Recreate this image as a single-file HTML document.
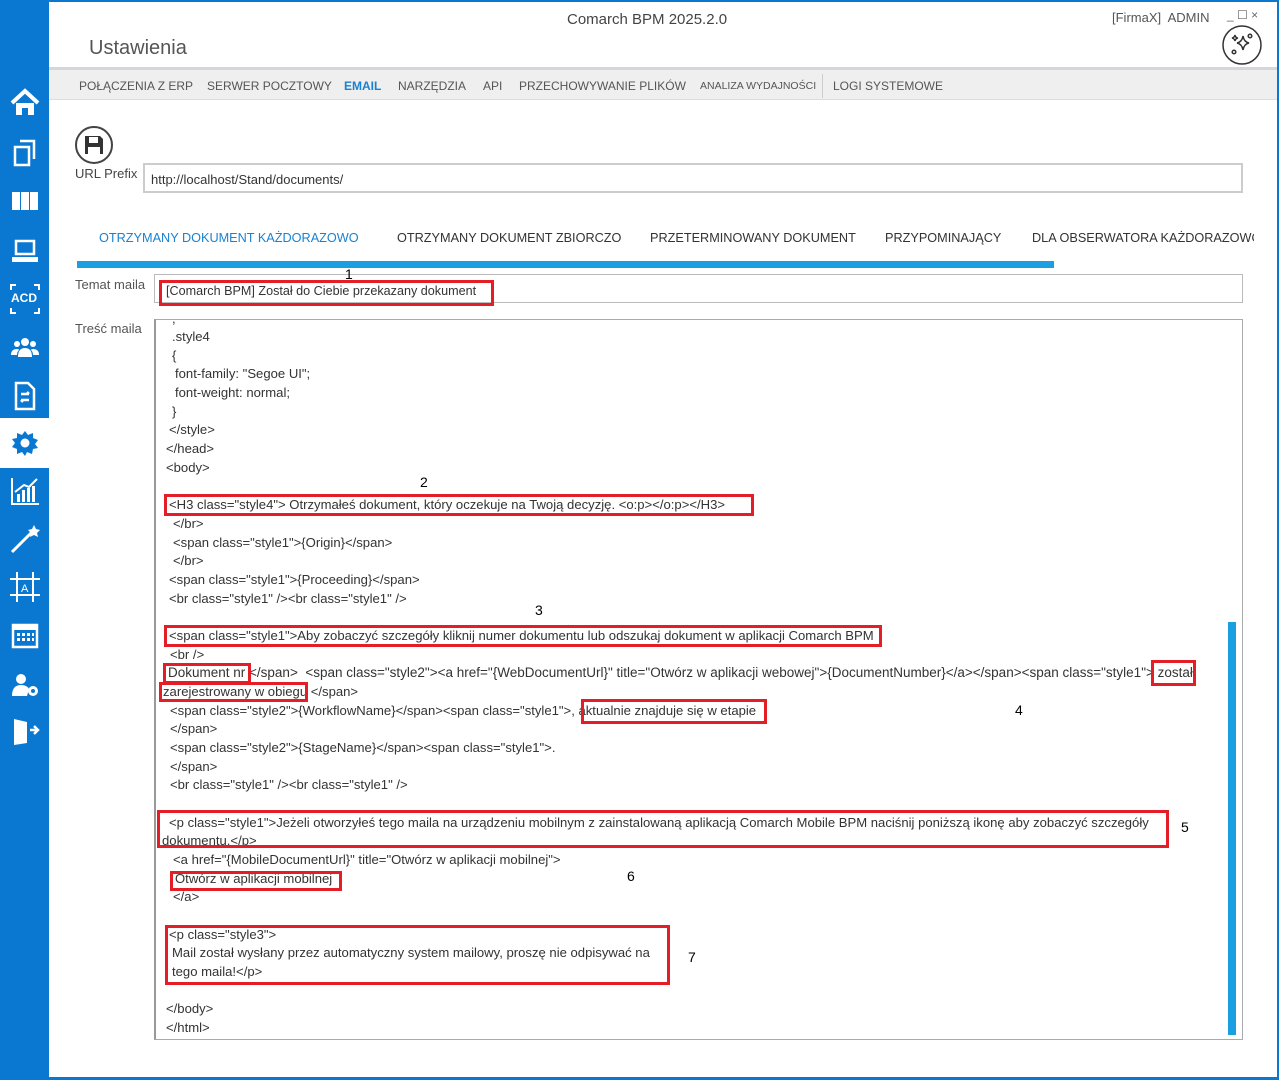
<!DOCTYPE html>
<html><head><meta charset="utf-8"><style>
*{margin:0;padding:0;box-sizing:border-box}
body{width:1279px;height:1080px;background:#fff;font-family:"Liberation Sans",sans-serif;color:#333;position:relative;overflow:hidden}
.a{position:absolute;white-space:nowrap}
#side{position:absolute;left:0;top:0;width:49px;height:1080px;background:#0a78d0}
.ic{position:absolute;left:10px;width:30px;height:30px}
.c{position:absolute;font-size:13.1px;line-height:18px;white-space:nowrap;color:#333}
.r{position:absolute;border:3px solid #e41e26}
.n{position:absolute;font-size:14px;color:#222}
.nav{font-size:12px;color:#555;top:79px}
.tab{font-size:12.7px;color:#333;top:231px}
</style></head><body>
<div id="side"></div>
<div class="a" style="left:0;top:0;width:1279px;height:2px;background:#0a78d0"></div>
<div class="a" style="left:1277px;top:0;width:2px;height:1080px;background:#0a78d0"></div>
<div class="a" style="left:0;top:1077px;width:1279px;height:3px;background:#0a78d0"></div>
<div class="a" style="left:0;top:418px;width:49px;height:50px;background:#fff"></div>
<svg class="ic" style="top:88px" viewBox="0 0 30 30"><path d="M2 15L15 3L28 15" stroke="#fff" stroke-width="4" fill="none"/><path d="M6 15V27H12V20H18V27H24V15" fill="#fff"/></svg>
<svg class="ic" style="top:137px" viewBox="0 0 30 30" fill="none" stroke="#fff" stroke-width="2.5"><path d="M10 4H24V22"/><path d="M5 10H19V28H5Z"/></svg>
<svg class="ic" style="top:186px" viewBox="0 0 30 30" fill="#fff"><rect x="2" y="6" width="8" height="18"/><rect x="11" y="6" width="8" height="18"/><rect x="20" y="6" width="8" height="18"/></svg>
<svg class="ic" style="top:236px" viewBox="0 0 30 30"><rect x="6" y="5" width="18" height="13" fill="none" stroke="#fff" stroke-width="2.5"/><path d="M2 21H28V26H2Z" fill="#fff"/></svg>
<div class="a" style="left:11px;top:291px;font-size:12px;font-weight:bold;color:#fff">ACD</div>
<svg class="ic" style="top:284px" viewBox="0 0 30 30" fill="none" stroke="#fff" stroke-width="2"><path d="M1 6V1H6M24 1H29V6M29 24V29H24M6 29H1V24"/></svg>
<svg class="ic" style="top:333px" viewBox="0 0 30 30" fill="#fff"><circle cx="15" cy="9" r="4"/><circle cx="7" cy="11" r="3"/><circle cx="23" cy="11" r="3"/><path d="M8 24Q8 15 15 15Q22 15 22 24Z"/><path d="M1 22Q1 16 7 16Q9 16 9 17Q7 19 7 22Z"/><path d="M29 22Q29 16 23 16Q21 16 21 17Q23 19 23 22Z"/></svg>
<svg class="ic" style="top:381px" viewBox="0 0 30 30" fill="none" stroke="#fff" stroke-width="2.5"><path d="M6 2H18L24 8V28H6Z"/><path d="M11 13H19M17 11L19 13M19 19H11M13 21L11 19"/></svg>
<svg class="ic" style="top:428px" viewBox="0 0 30 30"><path d="M15 3L18 7L23 5L23 10L28 12L25 16L28 20L23 21L22 26L17 24L15 28L12 24L7 26L7 21L2 19L5 15L2 11L7 10L7 5L12 7Z" fill="#0a78d0"/><circle cx="15" cy="15" r="4.5" fill="#fff"/></svg>
<svg class="ic" style="top:476px" viewBox="0 0 30 30" fill="#fff"><path d="M2 2V28H29" stroke="#fff" stroke-width="2" fill="none"/><rect x="7" y="18" width="3" height="8"/><rect x="12" y="14" width="3" height="12"/><rect x="17" y="12" width="3" height="14"/><rect x="22" y="10" width="3" height="16"/><path d="M5 16L14 9L19 11L27 3" stroke="#fff" stroke-width="2" fill="none"/></svg>
<svg class="ic" style="top:524px" viewBox="0 0 30 30"><path d="M2 28L22 8" stroke="#fff" stroke-width="3"/><path d="M24 1L26 5L30 6L27 9L28 13L24 11L20 13L21 9L18 6L22 5Z" fill="#fff"/></svg>
<svg class="ic" style="top:572px" viewBox="0 0 30 30" fill="none" stroke="#fff" stroke-width="2"><path d="M7 0V30M23 0V30M0 7H30M0 23H30"/><text x="11" y="20" font-size="11" fill="#fff" stroke="none" font-family="Liberation Sans">A</text></svg>
<svg class="ic" style="top:621px" viewBox="0 0 30 30"><rect x="3" y="4" width="24" height="22" fill="none" stroke="#fff" stroke-width="2.5"/><rect x="3" y="4" width="24" height="5" fill="#fff"/><g fill="#fff"><rect x="7" y="12" width="3" height="3"/><rect x="12" y="12" width="3" height="3"/><rect x="17" y="12" width="3" height="3"/><rect x="22" y="12" width="2" height="3"/><rect x="7" y="17" width="3" height="3"/><rect x="12" y="17" width="3" height="3"/><rect x="17" y="17" width="3" height="3"/><rect x="22" y="17" width="2" height="3"/></g></svg>
<svg class="ic" style="top:670px" viewBox="0 0 30 30" fill="#fff"><circle cx="11" cy="9" r="5"/><path d="M2 26Q2 15 11 15Q17 15 19 19L17 26Z"/><circle cx="23" cy="21" r="5"/><circle cx="23" cy="21" r="2" fill="#0a78d0"/></svg>
<svg class="ic" style="top:716px" viewBox="0 0 30 30" fill="#fff"><path d="M4 3L17 6V27L4 29Z"/><path d="M20 14H28M24 10L28 14L24 18" stroke="#fff" stroke-width="2.5" fill="none"/></svg>

<div class="a" style="left:567px;top:11px;font-size:15px;color:#444">Comarch BPM 2025.2.0</div>
<div class="a" style="left:89px;top:37px;font-size:20px;color:#555">Ustawienia</div>
<div class="a" style="left:1112px;top:10px;font-size:13px;color:#555">[FirmaX]&nbsp; ADMIN</div>
<div class="a" style="left:1227px;top:8px;font-size:12px;color:#666">_ ☐ ×</div>
<svg class="a" style="left:1221px;top:24px" width="42" height="42" viewBox="0 0 42 42" fill="none" stroke="#333" stroke-width="1.5"><circle cx="21" cy="21" r="19"/><path d="M22 12Q23 18 28 19Q23 20 22 26Q21 20 16 19Q21 18 22 12Z"/><path d="M14 11Q14.5 14 17 14Q14.5 14.5 14 17Q13.5 14.5 11 14Q13.5 13.5 14 11Z"/><circle cx="29" cy="12" r="1.8"/><circle cx="13" cy="28" r="1.8"/></svg>
<div class="a" style="left:49px;top:67px;width:1228px;height:33px;background:#efefef;border-top:3px solid #d5d5dd;border-bottom:1px solid #ddd"></div>
<div class="n nav" style="left:79px">POŁĄCZENIA Z ERP</div>
<div class="n nav" style="left:207px">SERWER POCZTOWY</div>
<div class="n nav" style="left:344px;color:#1a82d0;font-weight:bold">EMAIL</div>
<div class="n nav" style="left:398px">NARZĘDZIA</div>
<div class="n nav" style="left:483px">API</div>
<div class="n nav" style="left:519px">PRZECHOWYWANIE PLIKÓW</div>
<div class="n nav" style="left:700px;font-size:10.5px;top:80px">ANALIZA WYDAJNOŚCI</div>
<div class="a" style="left:822px;top:74px;width:1px;height:24px;background:#ccc"></div>
<div class="n nav" style="left:833px">LOGI SYSTEMOWE</div>

<svg class="a" style="left:74px;top:125px" width="40" height="40" viewBox="0 0 40 40"><circle cx="20" cy="20" r="18" fill="none" stroke="#444" stroke-width="2"/><path d="M11 11H26L29 14V29H11Z" fill="#333"/><rect x="15" y="12" width="9" height="6" fill="#fff"/><rect x="14" y="22" width="12" height="7" fill="#fff"/></svg>
<div class="n" style="left:75px;top:166px;font-size:13px;color:#444">URL Prefix</div>
<div class="a" style="left:143px;top:163px;width:1100px;height:30px;border:2px solid #ccc"></div>
<div class="n" style="left:151px;top:172px;font-size:13px;color:#333">http://localhost/Stand/documents/</div>

<div class="a" style="left:49px;top:225px;width:1205px;height:25px;overflow:hidden">
<div class="n tab" style="left:50px;top:6px;color:#1a82d0">OTRZYMANY DOKUMENT KAŻDORAZOWO</div>
<div class="n tab" style="left:348px;top:6px">OTRZYMANY DOKUMENT ZBIORCZO</div>
<div class="n tab" style="left:601px;top:6px">PRZETERMINOWANY DOKUMENT</div>
<div class="n tab" style="left:836px;top:6px">PRZYPOMINAJĄCY</div>
<div class="n tab" style="left:983px;top:6px">DLA OBSERWATORA KAŻDORAZOWO</div>
</div>
<div class="a" style="left:77px;top:261px;width:977px;height:7px;background:#1aa0e0"></div>

<div class="n" style="left:75px;top:277px;font-size:13px;color:#555">Temat maila</div>
<div class="a" style="left:154px;top:274px;width:1089px;height:29px;border:1px solid #bbb"></div>
<div class="c" style="left:166px;top:282px;font-size:12.6px">[Comarch BPM] Został do Ciebie przekazany dokument</div>
<div class="a" style="left:345px;top:266px;font-size:14px;color:#000">1</div>
<div class="r" style="left:159px;top:280px;width:335px;height:26px"></div>

<div class="n" style="left:75px;top:321px;font-size:13px;color:#555">Treść maila</div>
<div class="a" style="left:154px;top:319px;width:1089px;height:721px;border:1px solid #aaa;border-left:2px solid #999"></div>
<div class="a" style="left:1228px;top:622px;width:8px;height:413px;background:#1aa0e0"></div>

<div class="c" style="left:172px;top:310px">,</div>
<div class="c" style="left:172px;top:328px">.style4</div>
<div class="c" style="left:172px;top:347px">{</div>
<div class="c" style="left:175px;top:365px">font-family: "Segoe UI";</div>
<div class="c" style="left:175px;top:384px">font-weight: normal;</div>
<div class="c" style="left:172px;top:403px">}</div>
<div class="c" style="left:169px;top:421px">&lt;/style&gt;</div>
<div class="c" style="left:166px;top:440px">&lt;/head&gt;</div>
<div class="c" style="left:166px;top:459px">&lt;body&gt;</div>
<div class="c" style="left:169px;top:496px">&lt;H3 class="style4"&gt; Otrzymałeś dokument, który oczekuje na Twoją decyzję. &lt;o:p&gt;&lt;/o:p&gt;&lt;/H3&gt;</div>
<div class="c" style="left:173px;top:515px">&lt;/br&gt;</div>
<div class="c" style="left:173px;top:534px">&lt;span class="style1"&gt;{Origin}&lt;/span&gt;</div>
<div class="c" style="left:173px;top:552px">&lt;/br&gt;</div>
<div class="c" style="left:169px;top:571px">&lt;span class="style1"&gt;{Proceeding}&lt;/span&gt;</div>
<div class="c" style="left:169px;top:590px">&lt;br class="style1" /&gt;&lt;br class="style1" /&gt;</div>
<div class="c" style="left:169px;top:627px">&lt;span class="style1"&gt;Aby zobaczyć szczegóły kliknij numer dokumentu lub odszukaj dokument w aplikacji Comarch BPM</div>
<div class="c" style="left:170px;top:646px">&lt;br /&gt;</div>
<div class="c" style="left:168px;top:664px;font-size:13.5px">Dokument nr &lt;/span&gt;&nbsp; &lt;span class="style2"&gt;&lt;a href="{WebDocumentUrl}" title="Otwórz w aplikacji webowej"&gt;{DocumentNumber}&lt;/a&gt;&lt;/span&gt;&lt;span class="style1"&gt; został</div>
<div class="c" style="left:163px;top:683px">zarejestrowany w obiegu &lt;/span&gt;</div>
<div class="c" style="left:170px;top:702px">&lt;span class="style2"&gt;{WorkflowName}&lt;/span&gt;&lt;span class="style1"&gt;, aktualnie znajduje się w etapie</div>
<div class="c" style="left:170px;top:720px">&lt;/span&gt;</div>
<div class="c" style="left:170px;top:739px">&lt;span class="style2"&gt;{StageName}&lt;/span&gt;&lt;span class="style1"&gt;.</div>
<div class="c" style="left:170px;top:758px">&lt;/span&gt;</div>
<div class="c" style="left:170px;top:776px">&lt;br class="style1" /&gt;&lt;br class="style1" /&gt;</div>
<div class="c" style="left:169px;top:814px">&lt;p class="style1"&gt;Jeżeli otworzyłeś tego maila na urządzeniu mobilnym z zainstalowaną aplikacją Comarch Mobile BPM naciśnij poniższą ikonę aby zobaczyć szczegóły</div>
<div class="c" style="left:162px;top:832px">dokumentu.&lt;/p&gt;</div>
<div class="c" style="left:173px;top:851px">&lt;a href="{MobileDocumentUrl}" title="Otwórz w aplikacji mobilnej"&gt;</div>
<div class="c" style="left:175px;top:870px">Otwórz w aplikacji mobilnej</div>
<div class="c" style="left:173px;top:888px">&lt;/a&gt;</div>
<div class="c" style="left:169px;top:926px">&lt;p class="style3"&gt;</div>
<div class="c" style="left:172px;top:944px">Mail został wysłany przez automatyczny system mailowy, proszę nie odpisywać na</div>
<div class="c" style="left:172px;top:963px">tego maila!&lt;/p&gt;</div>
<div class="c" style="left:166px;top:1000px">&lt;/body&gt;</div>
<div class="c" style="left:166px;top:1019px">&lt;/html&gt;</div>

<div class="r" style="left:164px;top:494px;width:590px;height:22px"></div>
<div class="r" style="left:164px;top:625px;width:718px;height:22px"></div>
<div class="r" style="left:163px;top:663px;width:88px;height:21px"></div>
<div class="r" style="left:1151px;top:660px;width:45px;height:26px"></div>
<div class="r" style="left:159px;top:682px;width:149px;height:20px"></div>
<div class="r" style="left:581px;top:699px;width:186px;height:25px"></div>
<div class="r" style="left:157px;top:810px;width:1012px;height:38px"></div>
<div class="r" style="left:170px;top:871px;width:172px;height:20px"></div>
<div class="r" style="left:165px;top:925px;width:505px;height:60px"></div>

<div class="a" style="left:420px;top:474px;font-size:14px;color:#000">2</div>
<div class="a" style="left:535px;top:602px;font-size:14px;color:#000">3</div>
<div class="a" style="left:1015px;top:702px;font-size:14px;color:#000">4</div>
<div class="a" style="left:1181px;top:819px;font-size:14px;color:#000">5</div>
<div class="a" style="left:627px;top:868px;font-size:14px;color:#000">6</div>
<div class="a" style="left:688px;top:949px;font-size:14px;color:#000">7</div>
</body></html>
